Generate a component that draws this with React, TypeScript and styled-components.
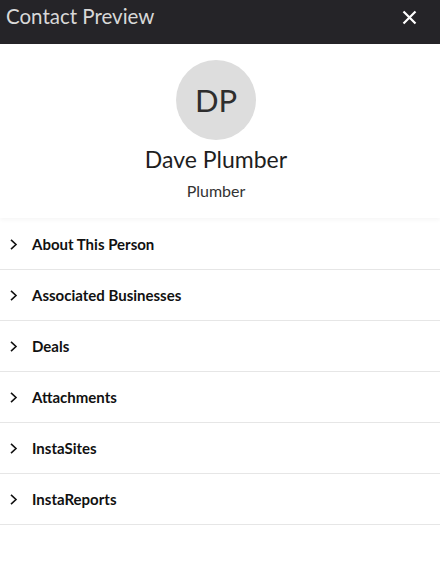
import React from 'react';
import styled, { createGlobalStyle } from 'styled-components';

const GlobalStyle = createGlobalStyle`
  html, body {
    margin: 0;
    padding: 0;
    background: #fff;
    font-family: Lato, "Open Sans", sans-serif;
  }
`;

const Panel = styled.div`
  width: 440px;
  height: 578px;
  display: flex;
  flex-direction: column;
  background: #fff;
`;

const Header = styled.header`
  height: 44px;
  background-color: #252428;
  display: flex;
  align-items: flex-start;
  justify-content: space-between;
  padding: 3px 22px 0 6px;
  box-sizing: border-box;
  flex-shrink: 0;
`;

const Title = styled.h2`
  margin: 0;
  font-size: 20.5px;
  font-weight: 400;
  color: #d8d8d8;
  line-height: 26px;
`;

const CloseButton = styled.button`
  background: none;
  border: none;
  padding: 0;
  margin-top: 5px;
  width: 18px;
  height: 18px;
  display: flex;
  align-items: center;
  justify-content: center;
  cursor: pointer;
`;

const Profile = styled.section`
  display: flex;
  flex-direction: column;
  align-items: center;
  padding: 16px 8px 0 0;
  height: 174px;
  box-sizing: border-box;
  box-shadow: 0 2px 4px rgba(0, 0, 0, 0.04);
`;

const Avatar = styled.div`
  width: 80px;
  height: 80px;
  border-radius: 50%;
  background-color: #dddddd;
  color: #2e2e2e;
  font-size: 31px;
  display: flex;
  align-items: center;
  justify-content: center;
`;

const Name = styled.div`
  margin-top: 5px;
  font-size: 23px;
  color: #1e1e1e;
  line-height: 28px;
`;

const Role = styled.div`
  margin-top: 7px;
  font-size: 16px;
  color: #333;
  line-height: 21px;
`;

const List = styled.ul`
  list-style: none;
  margin: 0;
  padding: 0;
  margin-top: 1px;
`;

const Row = styled.li`
  height: 50px;
  border-bottom: 1px solid #e6e6e6;
  display: flex;
  align-items: center;
  padding-left: 9px;
  gap: 14px;
  font-size: 15px;
  font-weight: 700;
  color: #111;
  cursor: pointer;
`;

const Chevron = () => (
  <svg width="9" height="13" viewBox="0 0 9 13" fill="none">
    <path d="M2 1.8 L7 6.5 L2 11.2" stroke="#111" strokeWidth="1.6" />
  </svg>
);

const sections = [
  'About This Person',
  'Associated Businesses',
  'Deals',
  'Attachments',
  'InstaSites',
  'InstaReports',
];

export default function App() {
  return (
    <>
      <GlobalStyle />
      <Panel>
        <Header>
          <Title>Contact Preview</Title>
          <CloseButton aria-label="Close">
            <svg width="15" height="15" viewBox="0 0 15 15">
              <path d="M1.5 1.5 L13.5 13.5 M13.5 1.5 L1.5 13.5" stroke="#fff" strokeWidth="2.2" />
            </svg>
          </CloseButton>
        </Header>
        <Profile>
          <Avatar>DP</Avatar>
          <Name>Dave Plumber</Name>
          <Role>Plumber</Role>
        </Profile>
        <List>
          {sections.map(s => (
            <Row key={s}>
              <Chevron />
              {s}
            </Row>
          ))}
        </List>
      </Panel>
    </>
  );
}
